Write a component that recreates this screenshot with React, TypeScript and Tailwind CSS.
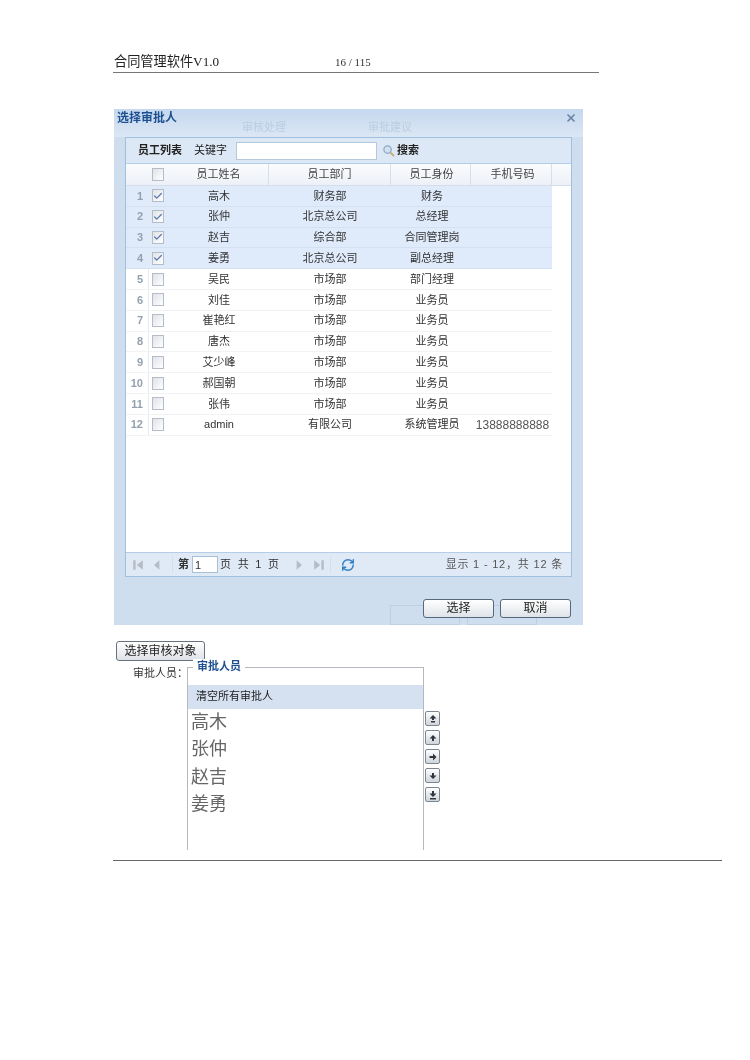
import { Check, RefreshCw, X } from "lucide-react";

const font = "font-['Liberation_Sans','Noto_Sans_CJK_SC',sans-serif]";

const rows = [
  { name: "高木", dept: "财务部", role: "财务", on: true },
  { name: "张仲", dept: "北京总公司", role: "总经理", on: true },
  { name: "赵吉", dept: "综合部", role: "合同管理岗", on: true },
  { name: "姜勇", dept: "北京总公司", role: "副总经理", on: true },
  { name: "吴民", dept: "市场部", role: "部门经理" },
  { name: "刘佳", dept: "市场部", role: "业务员" },
  { name: "崔艳红", dept: "市场部", role: "业务员" },
  { name: "唐杰", dept: "市场部", role: "业务员" },
  { name: "艾少峰", dept: "市场部", role: "业务员" },
  { name: "郝国朝", dept: "市场部", role: "业务员" },
  { name: "张伟", dept: "市场部", role: "业务员" },
  { name: "admin", dept: "有限公司", role: "系统管理员", phone: "13888888888" },
];

const approvers = ["高木", "张仲", "赵吉", "姜勇"];

function Box({ on }: { on?: boolean }) {
  return (
    <span className="flex h-[13px] w-[12px] items-center justify-center border border-[#b3bcc8] bg-gradient-to-br from-[#dfe2e7] to-white">
      {on && <Check className="h-[10px] w-[10px] text-[#5b78a8]" strokeWidth={3} />}
    </span>
  );
}

function Arrow({ d }: { d: string }) {
  return (
    <span className="flex h-[15px] w-[15px] items-center justify-center rounded-[2px] border border-[#7d8791] bg-gradient-to-b from-white to-[#cfd5dc]">
      <svg viewBox="0 0 10 10" className="h-[10px] w-[10px] text-[#30363c]" fill="currentColor">
        <path d={d} />
      </svg>
    </span>
  );
}

function Pager({ d }: { d: string }) {
  return (
    <svg viewBox="0 0 10 10" className="h-[12px] w-[12px] text-[#b4bcc6]" fill="currentColor">
      <path d={d} />
    </svg>
  );
}

function Btn({ label }: { label: string }) {
  return (
    <button className="h-[19px] w-[71px] rounded-[3px] border border-[#56687c] bg-gradient-to-b from-white to-[#dfe3e8] text-[12px] leading-[17px] text-[#222]">
      {label}
    </button>
  );
}

export default function App() {
  return (
    <div className={`${font} h-[1060px] w-[750px] overflow-hidden bg-white pl-[113px] pt-[54px] blur-[0.5px]`}>
      {/* page header */}
      <div className="flex h-[19px] w-[486px] items-center border-b border-[#777] pb-[2px]">
        <span className="w-[222px] pl-px font-['Liberation_Serif','Noto_Sans_CJK_SC',serif] text-[13.2px] text-[#222]">合同管理软件V1.0</span>
        <span className="font-['Liberation_Serif',serif] text-[11px] text-[#333]">16 / 115</span>
      </div>

      {/* dialog */}
      <div className="ml-px mt-[36px] flex h-[516px] w-[469px] flex-col bg-[#cfdeef]">
        <div className="relative flex h-[28px] shrink-0 items-start justify-between bg-gradient-to-b from-[#c5d8ee] to-[#dbe7f4] pl-[3px] pr-[6px]">
          <span className="text-[12px] font-bold text-[#1d4f91]">选择审批人</span>
          <span className="absolute left-[128px] top-[10px] text-[11px] text-[#bccde2]">审核处理</span>
          <span className="absolute left-[254px] top-[10px] text-[11px] text-[#bccde2]">审批建议</span>
          <X className="mt-[3px] h-[12px] w-[12px] text-[#6b86a8]" strokeWidth={3.5} />
        </div>

        <div className="relative mx-[11px] flex h-[440px] shrink-0 flex-col border border-[#9fc0e0] bg-white">
          <div className="flex h-[26px] shrink-0 items-center border-b border-[#b5cde6] bg-[#dce8f5] pl-[12px] text-[11px] text-[#222]">
            <span className="font-bold">员工列表</span>
            <span className="ml-[12px]">关键字</span>
            <span className="ml-[9px] h-[18px] w-[141px] border border-[#b5c8dc] bg-white" />
            <svg viewBox="0 0 14 14" className="ml-[5px] h-[13px] w-[13px]" fill="none">
              <circle cx="6" cy="6" r="4" fill="#cfe0f2" stroke="#8ea6bf" strokeWidth="1.3" />
              <path d="M9 9l4 4" stroke="#c9a878" strokeWidth="2" />
            </svg>
            <span className="ml-[2px] font-bold">搜索</span>
          </div>

          <div className="flex h-[22px] shrink-0 items-center border-b border-[#d4dfeb] bg-gradient-to-b from-[#fafbfd] to-[#edf1f7] text-[11px] text-[#444]">
            <span className="w-[22px]" />
            <span className="flex w-[19px] justify-center"><Box /></span>
            <span className="w-[102px] border-r border-[#d7dfe8] pl-[2px] text-center leading-[21px]">员工姓名</span>
            <span className="w-[122px] border-r border-[#d7dfe8] text-center leading-[21px]">员工部门</span>
            <span className="w-[80px] border-r border-[#d7dfe8] pl-[2px] text-center leading-[21px]">员工身份</span>
            <span className="w-[81px] border-r border-[#d7dfe8] pl-[3px] text-center leading-[21px]">手机号码</span>
          </div>

          <div className="flex-1">
            {rows.map((r, i) => (
              <div
                key={r.name}
                className={`flex h-[20.8px] w-[426px] items-center border-b text-[11px] text-[#333] ${r.on ? "border-[#d3e1f0] bg-[#dfeafa]" : "border-[#f1f3f5] bg-white"}`}
              >
                <span className="w-[22px] pr-[5px] text-right font-bold text-[#93a1af]">{i + 1}</span>
                <span className="flex h-full w-[19px] items-center justify-center border-l border-[#e6ebf2]"><Box on={r.on} /></span>
                <span className="w-[102px] pl-[2px] text-center">{r.name}</span>
                <span className="w-[122px] text-center">{r.dept}</span>
                <span className="w-[80px] pl-[2px] text-center">{r.role}</span>
                <span className="w-[81px] whitespace-nowrap pl-[2px] text-center text-[12px] text-[#555]">{r.phone}</span>
              </div>
            ))}
          </div>

          <div className="flex h-[24px] shrink-0 items-center border-t border-[#b5cde6] bg-[#dfeaf6] pl-[6px] pr-[8px] text-[11px] text-[#333]">
            <Pager d="M1 1h2v8H1zM9 1 4 5l5 4z" />
            <span className="ml-[7px]"><Pager d="M7 1 2.500 5 7 9z" /></span>
            <span className="ml-[9px] border-l border-[#d3deea] pl-[5px] font-bold">第</span>
            <span className="ml-[3px] h-[17px] w-[26px] border border-[#a9bfd6] bg-white pl-[2px] text-[11px] leading-[16px]">1</span>
            <span className="ml-[2px] tracking-[1.8px]">页 共 1 页</span>
            <span className="ml-[12px]"><Pager d="M3 1l4.500 4L3 9z" /></span>
            <span className="ml-[8px]"><Pager d="M1 1l5 4-5 4zM7 1h2v8H7z" /></span>
            <span className="ml-[5px] h-[16px] border-l border-[#d3deea]" />
            <RefreshCw className="ml-[10px] h-[14px] w-[14px] text-[#2f7fc7]" strokeWidth={2.5} />
            <span className="ml-auto text-[#555] tracking-[0.8px]">显示 1 - 12，共 12 条</span>
          </div>
        </div>

        {/* footer, with the faint buttons of the window behind it */}
        <div className="relative flex flex-1 items-start justify-end gap-[6px] pr-[12px] pt-[18px]">
          <span className="absolute left-[276px] top-[28px] h-[20px] w-[70px] border border-[#c0cfdf]" />
          <span className="absolute left-[353px] top-[28px] h-[20px] w-[70px] border border-[#c0cfdf]" />
          <span className="relative"><Btn label="选择" /></span>
          <span className="relative"><Btn label="取消" /></span>
        </div>
      </div>

      {/* approver picker */}
      <button className="ml-[3px] mt-[16px] block h-[20px] w-[89px] rounded-[3px] border border-[#66727f] bg-gradient-to-b from-white to-[#dfe2e6] text-[12px] text-[#222]">
        选择审核对象
      </button>

      <div className="mt-[6px] flex">
        <span className="w-[75px] text-right text-[11px] leading-[13px] text-[#333]">审批人员：</span>
        <div className="relative -ml-px h-[183px] w-[237px] border-l border-r border-t border-[#b4b9bf]">
          <span className="absolute left-[5px] top-[-9px] bg-white px-[4px] text-[11px] font-bold leading-[14px] text-[#1d4f91]">审批人员</span>
          <div className="mt-[17px] h-[24px] bg-[#d5e0f1] pl-[8px] text-[11px] leading-[23px] text-[#222]">清空所有审批人</div>
          <div className="pl-[3px] text-[#666]">
            {approvers.map((n) => (
              <div key={n} className="h-[27.3px] text-[18px] leading-[26px]">{n}</div>
            ))}
          </div>
        </div>
        <div className="ml-[1px] flex flex-col gap-[4px] pt-[44px]">
          <Arrow d="M5 1 1.500 4.500H4V6h2V4.500h2.500zM3 7h4v1.500H3z" />
          <Arrow d="M5 2 1.500 5.500H4V8h2V5.500h2.500z" />
          <Arrow d="M8.500 5 5 1.500V4H1.500v2H5v2.500z" />
          <Arrow d="M5 8 1.500 4.500H4V2h2v2.500h2.500z" />
          <Arrow d="M5 7 1.500 3.500H4V1h2v2.500h2.500zM2 8h6v1.500H2z" />
        </div>
      </div>

      <div className="mt-[10px] h-px w-[609px] bg-[#666]" />
    </div>
  );
}
